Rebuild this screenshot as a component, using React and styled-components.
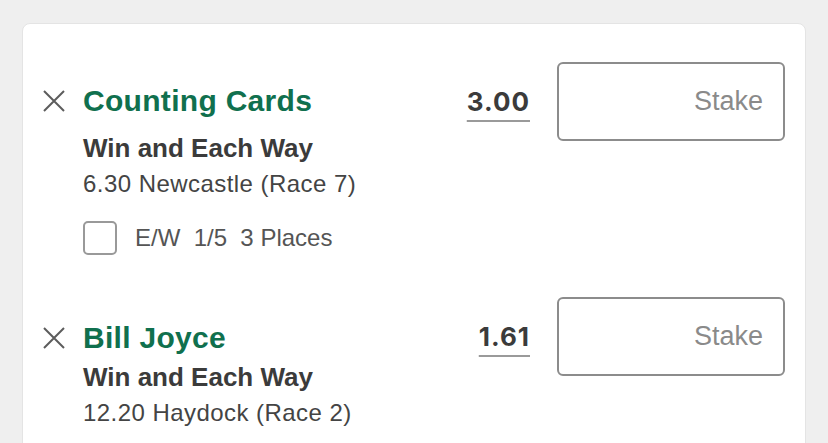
import styled, { createGlobalStyle } from 'styled-components'

const GlobalStyle = createGlobalStyle`
  html, body {
    margin: 0;
    padding: 0;
    background: #efefef;
    font-family: "Liberation Sans", Arial, sans-serif;
  }
`

const Card = styled.section`
  box-sizing: border-box;
  width: 784px;
  min-height: 440px;
  margin: 23px 0 0 22px;
  padding: 38px 20px 0 20px;
  background: #fff;
  border: 1px solid #e4e4e4;
  border-radius: 8px;
`

const Bet = styled.div`
  display: flex;
  align-items: flex-start;
  & + & {
    margin-top: 42px;
  }
`

const Info = styled.div`
  flex: 1;
  padding-top: ${(p) => p.$top}px;
`

const Head = styled.div`
  display: flex;
  align-items: center;
  gap: 18px;
`

const RemoveIcon = styled.svg`
  width: 22px;
  height: 22px;
  flex: none;
  stroke: #5c5c5c;
  stroke-width: 2;
`

const Name = styled.div`
  font-size: 30px;
  line-height: 36px;
  font-weight: 700;
  letter-spacing: 0.3px;
  color: #10704e;
`

const Details = styled.div`
  margin-left: 40px;
  margin-top: ${(p) => p.$gap}px;
`

const Market = styled.div`
  font-size: 26px;
  line-height: 32px;
  font-weight: 700;
  color: #3b3b3b;
`

const Race = styled.div`
  margin-top: 5px;
  font-size: 24px;
  line-height: 30px;
  letter-spacing: 0.45px;
  color: #444;
`

const EachWay = styled.label`
  display: flex;
  align-items: center;
  gap: 18px;
  margin-top: 22px;
  font-size: 24px;
  color: #555;
  white-space: pre;
`

const Box = styled.span`
  box-sizing: border-box;
  width: 34px;
  height: 34px;
  border: 2px solid #999;
  border-radius: 5px;
`

const Side = styled.div`
  display: flex;
  align-items: center;
  gap: 27px;
  height: 79px;
`

const Odds = styled.span`
  font-family: Inter, "Liberation Sans", sans-serif;
  font-size: 26px;
  font-weight: 700;
  letter-spacing: 1px;
  color: #3b3b3b;
  text-decoration: underline;
  text-decoration-color: #9a9a9a;
  text-decoration-thickness: 2px;
  text-underline-offset: 9px;
`

const Stake = styled.input`
  box-sizing: border-box;
  width: 228px;
  height: 79px;
  padding: 0 20px;
  border: 2px solid #8c8c8c;
  border-radius: 6px;
  font-family: "Liberation Sans", Arial, sans-serif;
  font-size: 27px;
  text-align: right;
  color: #3b3b3b;
  background: #fff;
  outline: none;
  &::placeholder {
    color: #8a8a8a;
  }
`

const bets = [
  { name: 'Counting Cards', race: '6.30 Newcastle (Race 7)', odds: '3.00', top: 21, gap: 13, ew: true },
  { name: 'Bill Joyce', race: '12.20 Haydock (Race 2)', odds: '1.61', top: 23, gap: 5, ew: false },
]

export default function App() {
  return (
    <>
      <GlobalStyle />
      <Card>
        {bets.map((b) => (
          <Bet key={b.name}>
            <Info $top={b.top}>
              <Head>
                <RemoveIcon viewBox="0 0 22 22" fill="none">
                  <path d="M1 1L21 21M21 1L1 21" />
                </RemoveIcon>
                <Name>{b.name}</Name>
              </Head>
              <Details $gap={b.gap}>
                <Market>Win and Each Way</Market>
                <Race>{b.race}</Race>
                {b.ew && (
                  <EachWay>
                    <Box />
                    <span>{'E/W  1/5  3 Places'}</span>
                  </EachWay>
                )}
              </Details>
            </Info>
            <Side>
              <Odds>{b.odds}</Odds>
              <Stake placeholder="Stake" />
            </Side>
          </Bet>
        ))}
      </Card>
    </>
  )
}
